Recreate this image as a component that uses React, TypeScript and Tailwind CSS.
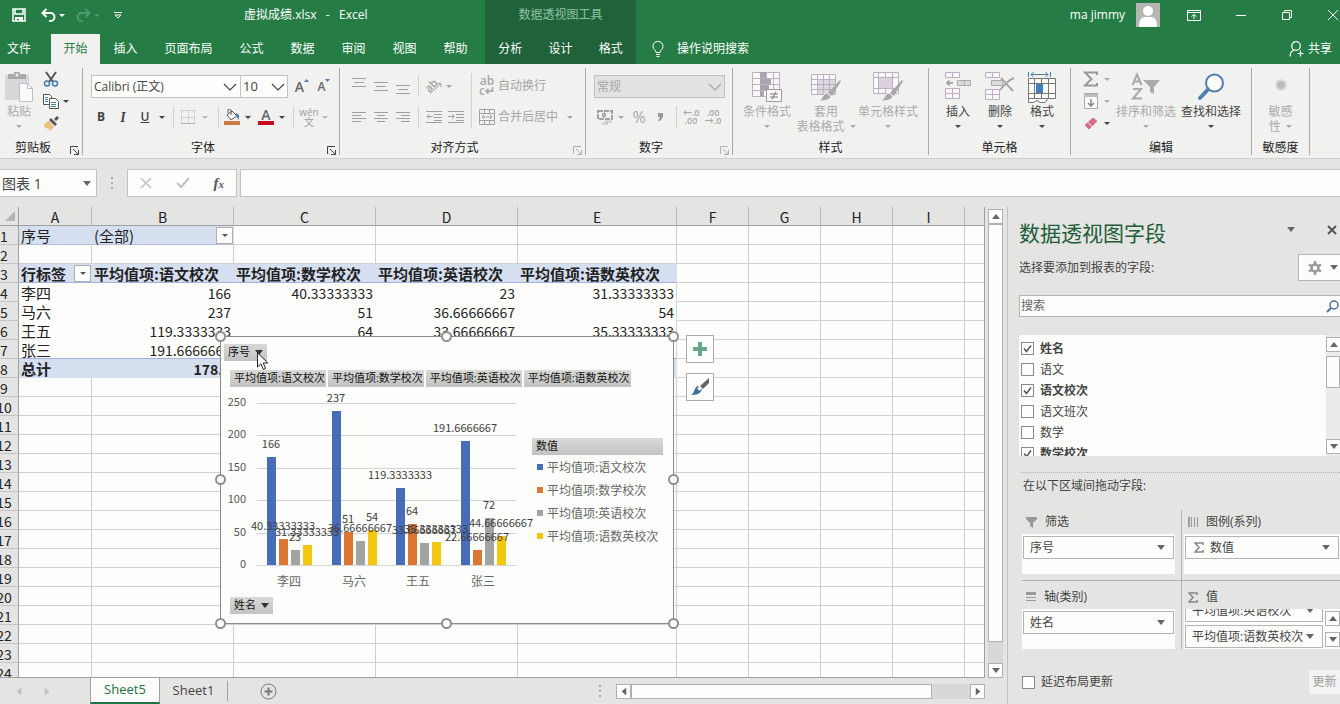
import { FunctionComponent, ReactNode } from "react";

interface IconProps {
  className?: string;
}

const Caret: FunctionComponent<IconProps> = ({ className = "" }) => (
  <svg viewBox="0 0 6 3" className={`h-[3px] w-[6px] shrink-0 fill-current ${className}`}>
    <path d="M0 0h6L3 3z" />
  </svg>
);

const Triangle: FunctionComponent<IconProps> = ({ className = "fill-[#666]" }) => (
  <svg viewBox="0 0 8 5" className={`h-[5px] w-2 shrink-0 ${className}`}>
    <path d="M0 0h8L4 5z" />
  </svg>
);

const Chevron: FunctionComponent<IconProps> = ({ className = "" }) => (
  <svg
    viewBox="0 0 14 8"
    className={`pointer-events-none absolute h-2 w-[14px] fill-none stroke-current ${className}`}
  >
    <path d="M1 1l6 6 6-6" strokeWidth="1.2" />
  </svg>
);

/* ---------- Ribbon building blocks ---------- */

interface GroupProps {
  label: string;
  className: string;
  launcher?: "on" | "off";
  children: ReactNode;
}

const Group: FunctionComponent<GroupProps> = ({ label, className, launcher, children }) => (
  <section
    aria-label={label}
    className={`flex h-[87px] shrink-0 flex-col border-r border-[#aaa] ${className}`}
  >
    <div className="flex h-[72px]">{children}</div>
    <div className="flex h-[15px] items-center leading-[15px] text-[#222]">
      <span className="flex-1 text-center">{label}</span>
      {launcher && (
        <button
          aria-label={`${label}设置`}
          className={`flex h-[15px] w-4 items-end justify-center ${
            launcher === "on" ? "text-[#444]" : "text-[#b0b0b0]"
          }`}
        >
          <svg viewBox="0 0 9 9" className="size-[9px] fill-none stroke-current">
            <path d="M.5 8V.5H8M3 3l5 5M8.500 4v4.500H4" />
          </svg>
        </button>
      )}
    </div>
  </section>
);

interface ToolProps {
  label: string;
  className: string;
  children: ReactNode;
}

const Tool: FunctionComponent<ToolProps> = ({ label, className, children }) => (
  <button
    aria-label={label}
    className={`flex h-[22px] shrink-0 items-center justify-center ${className}`}
  >
    {children}
  </button>
);

interface BigToolProps {
  className: string;
  icon: ReactNode;
  children: ReactNode;
}

const BigTool: FunctionComponent<BigToolProps> = ({ className, icon, children }) => (
  <button
    className={`flex shrink-0 flex-col items-center pt-1 leading-[15px] whitespace-nowrap ${className}`}
  >
    <span className="mb-[2px] flex h-[30px] items-center">{icon}</span>
    {children}
  </button>
);

const CaretLine = () => (
  <span className="flex h-[15px] items-center">
    <Caret />
  </span>
);

const Divider: FunctionComponent<IconProps> = ({ className = "mx-[5px] h-[22px]" }) => (
  <span className={`w-px shrink-0 bg-[#d0d0d0] ${className}`} />
);

const Lines = ({ d }: { d: string }) => (
  <svg viewBox="0 0 16 16" className="size-4 fill-none stroke-[#a0a0a0]">
    <path d={d} />
  </svg>
);

/* ---------- Header ---------- */

const TABS = ["插入", "页面布局", "公式", "数据", "审阅", "视图", "帮助"];

const Header = () => (
  <header className="flex h-16 overflow-hidden bg-[#257d45] text-white">
    <div className="flex w-[485px] shrink-0 flex-col justify-between">
      <div className="flex h-[30px] items-center">
        <button aria-label="保存" className="ml-3">
          <svg viewBox="0 0 14 14" className="size-[14px] fill-none stroke-white" strokeWidth="1.5">
            <path d="M1 1h12v12H1zM3 1v5h8V1" />
            <path d="M3 9h8v4H7v-2H5v2H3z" className="fill-white stroke-none" />
          </svg>
        </button>
        <button aria-label="撤消" className="ml-[15px]">
          <svg viewBox="0 0 15 14" className="h-[14px] w-[15px] fill-none stroke-white" strokeWidth="2">
            <path d="M5.500 1L1.500 5l4 4M2 5h7.500a4 4 0 010 8H8" />
          </svg>
        </button>
        <Caret className="ml-[3px]" />
        <button aria-label="恢复" className="ml-[11px]">
          <svg viewBox="0 0 15 14" className="h-[14px] w-[15px] fill-none stroke-[#4f9a6a]" strokeWidth="2">
            <path d="M9.500 1l4 4-4 4M13 5H5.500a4 4 0 000 8H7" />
          </svg>
        </button>
        <Caret className="ml-[3px] text-[#4f9a6a]" />
        <button aria-label="自定义快速访问工具栏" className="ml-[14px]">
          <svg viewBox="0 0 8 7" className="h-[7px] w-2 fill-none stroke-white">
            <path d="M0 .5h8M1 3l3 3 3-3z" />
          </svg>
        </button>
        <h1 className="ml-[122px] whitespace-pre">虚拟成绩.xlsx   -   Excel</h1>
      </div>
      <nav className="flex h-[30px] items-center">
        <button className="w-[51px] pl-[7px] text-left">文件</button>
        <button className="h-full w-[49px] bg-[#f1f1ef] text-[#257d45]">开始</button>
        {TABS.map((tab) => (
          <button key={tab} className={tab.length > 2 ? "w-[75px]" : "w-[51px]"}>
            {tab}
          </button>
        ))}
      </nav>
    </div>

    <div className="flex w-[151px] shrink-0 flex-col justify-between bg-[#206239]">
      <p className="flex h-[30px] items-center justify-center text-[#8fc4a2]">数据透视图工具</p>
      <nav className="grid h-[30px] grid-cols-3 items-center">
        <button>分析</button>
        <button>设计</button>
        <button>格式</button>
      </nav>
    </div>

    <div className="flex flex-1 flex-col justify-between">
      <div className="flex h-[30px] items-center justify-end">
        <span>ma jimmy</span>
        <svg viewBox="0 0 24 24" className="ml-[11px] size-6 bg-[#b5b5b3] fill-white">
          <circle cx="12" cy="8" r="5" />
          <path d="M3 24c0-7 2-10 6-10h6c4 0 6 3 6 10z" />
        </svg>
        <button aria-label="功能区显示选项" className="ml-[27px]">
          <svg viewBox="0 0 14 11" className="h-[11px] w-[14px] fill-none stroke-white">
            <path d="M.5.5h13v10H.5zM.5 2.500h13M7 9V4.500M4.500 6.500L7 4.500l2.500 2" />
          </svg>
        </button>
        <button aria-label="最小化" className="ml-[35px]">
          <svg viewBox="0 0 10 10" className="size-[10px] stroke-white">
            <path d="M0 5.500h10" />
          </svg>
        </button>
        <button aria-label="还原" className="ml-[36px]">
          <svg viewBox="0 0 10 10" className="size-[10px] fill-none stroke-white">
            <path d="M.5 2.500h7v7h-7zM2.500 2.500v-2h7v7h-2" />
          </svg>
        </button>
        <button aria-label="关闭" className="mr-[2px] ml-[36px]">
          <svg viewBox="0 0 10 10" className="size-[10px] stroke-white">
            <path d="M0 0l10 10M10 0L0 10" />
          </svg>
        </button>
      </div>
      <div className="flex h-[30px] items-center pr-2 pl-4">
        <svg viewBox="0 0 12 16" className="h-4 w-3 fill-none stroke-white">
          <path d="M4 11.500c0-2.500-3-3-3-6.200a5 5 0 0110 0c0 3.200-3 3.700-3 6.200zM4 13.500h4M4.500 15.500h3" />
        </svg>
        <button className="ml-[13px]">操作说明搜索</button>
        <button className="ml-auto flex items-center gap-1">
          <svg viewBox="0 0 15 16" className="h-4 w-[15px] fill-none stroke-white" strokeWidth="1.2">
            <circle cx="7" cy="5" r="4.300" />
            <path d="M1 15.500c0-4 1.500-5.500 4-6.500M11.500 9.500v6M8.500 12.500h6" />
          </svg>
          共享
        </button>
      </div>
    </div>
  </header>
);

/* ---------- Ribbon ---------- */

const StyleBrush = () => (
  <>
    <path d="M29 8l1 1-9 15-4-3z" className="fill-[#a8a8a8] stroke-none" />
    <path d="M16 21l4 3c-1 4-6 5-12 5 4-2 3-7 8-8z" className="fill-[#a8a8a8] stroke-[#f1f1ef]" />
  </>
);

const Ribbon = () => (
  <div className="flex h-[95px] overflow-hidden border-b border-[#d0d0ce] bg-[#f1f1ef] pt-1 text-[#444]">
    <Group label="剪贴板" launcher="on" className="w-[83px]">
      <BigTool
        className="ml-[3px] w-8 text-[#ababab]"
        icon={
          <svg viewBox="0 0 28 30" className="h-[30px] w-7">
            <path d="M0 3h24v25H0z" fill="#d8d6da" />
            <path d="M3 2h6a3 3 0 016 0h6v5H3z" fill="#a9a9ad" />
            <circle cx="12" cy="3" r="1.500" fill="#f1f1ef" />
            <path d="M14.500 11.500h8l5 5v13h-13z" fill="#fbf9fc" stroke="#c0bec4" />
            <path d="M22.500 11.500v5h5" fill="none" stroke="#c0bec4" />
          </svg>
        }
      >
        粘贴
        <CaretLine />
      </BigTool>
      <div className="ml-1 flex w-9 flex-col">
        <Tool label="剪切" className="w-6">
          <svg viewBox="0 0 16 16" className="size-4 fill-none" strokeWidth="1.500">
            <path d="M3 1l7 10M13 1L6 11" stroke="#555" strokeWidth="2" />
            <circle cx="4" cy="12.500" r="2.500" stroke="#4a7eac" />
            <circle cx="12" cy="12.500" r="2.500" stroke="#4a7eac" />
          </svg>
        </Tool>
        <div className="flex items-center">
          <Tool label="复制" className="w-6">
            <svg viewBox="0 0 16 15" className="h-[15px] w-4 fill-[#fdfdfb] stroke-[#555]">
              <path d="M.5.5h6l2 2v8h-8z" />
              <path d="M6.500 4.500h6l3 3v7h-9z" />
              <path d="M2 3.500h3M2 5.500h3M2 7.500h3M8 8.500h5M8 10.500h5M8 12.500h5" stroke="#4a7eac" />
            </svg>
          </Tool>
          <Caret />
        </div>
        <Tool label="格式刷" className="w-6">
          <svg viewBox="0 0 16 15" className="h-[15px] w-4">
            <path d="M1 8l5-3 5 6-4 4-2-3-1 1-1-2-1 1z" fill="#eac17c" />
            <path d="M6 4l2-2 6 6-2 2zM11 3l3-3 2 2-3 3z" fill="#555" />
          </svg>
        </Tool>
      </div>
    </Group>

    <Group label="字体" launcher="on" className="w-[257px]">
      <div className="flex flex-col gap-2 pt-[7px]">
        <div className="flex h-[23px] items-center pl-2">
          <div className="relative flex items-center">
            <select
              aria-label="字体名称"
              className="h-[23px] w-[150px] appearance-none border border-[#c3c3c3] bg-[#fdfdfb] pl-[2px] text-[12px] leading-[21px]"
            >
              <option>Calibri (正文)</option>
            </select>
            <Chevron className="right-1" />
          </div>
          <div className="relative -ml-px flex items-center">
            <select
              aria-label="字号"
              className="h-[23px] w-[48px] appearance-none border border-[#c3c3c3] bg-[#fdfdfb] pl-[2px] text-[13px] leading-[21px]"
            >
              <option>10</option>
            </select>
            <Chevron className="right-[3px]" />
          </div>
          <Tool label="增大字号" className="ml-[3px] w-[22px] text-[14px] font-semibold text-[#666]">
            A
            <svg viewBox="0 0 5 3" className="mb-3 h-[3px] w-[5px] fill-[#4a7eac]">
              <path d="M0 3h5L2.500 0z" />
            </svg>
          </Tool>
          <Tool label="减小字号" className="w-[22px] text-[12px] font-semibold text-[#666]">
            A
            <svg viewBox="0 0 5 3" className="mb-3 h-[3px] w-[5px] fill-[#4a7eac]">
              <path d="M0 0h5L2.500 3z" />
            </svg>
          </Tool>
        </div>
        <div className="flex items-center pl-[7px]">
          <Tool label="加粗" className="w-[22px] font-bold">
            B
          </Tool>
          <Tool label="倾斜" className="w-[22px] font-['Liberation_Serif',serif] text-[14px] font-bold italic">
            I
          </Tool>
          <Tool label="下划线" className="w-[22px] font-semibold underline">
            U
          </Tool>
          <Tool label="下划线选项" className="w-3">
            <Caret />
          </Tool>
          <Divider />
          <Tool label="边框" className="w-[18px]">
            <svg viewBox="0 0 14 14" className="size-[14px] fill-none stroke-[#b8b0bc]" strokeDasharray="1 1">
              <path d="M.5.5h13M.5 7.500h13M.5.5v13M7.500.5v13M13.500.5v13" />
              <path d="M0 13.500h14" strokeDasharray="none" />
            </svg>
          </Tool>
          <Tool label="边框选项" className="w-4 text-[#bbb]">
            <Caret />
          </Tool>
          <Divider />
          <Tool label="填充颜色" className="w-4">
            <svg viewBox="0 0 16 16" className="size-4">
              <path d="M3 6l5-4 5 5-6 4z" fill="#fdfdfb" stroke="#555" />
              <path d="M7 6V1.500a1.500 1.500 0 00-3 0V4" fill="none" stroke="#555" />
              <path d="M12 4c3 1 4 3 2.500 7-.8-1-1-3-2.500-4z" fill="#4a7eac" />
              <path d="M0 12h16v4H0z" fill="#cc7a45" />
            </svg>
          </Tool>
          <Tool label="填充颜色选项" className="w-4">
            <Caret />
          </Tool>
          <Tool label="字体颜色" className="w-5">
            <span className="flex w-4 flex-col items-center text-[14px] leading-[12px] font-semibold text-[#666]">
              A
              <span className="h-1 w-full bg-[#c30d1e]" />
            </span>
          </Tool>
          <Tool label="字体颜色选项" className="w-3">
            <Caret />
          </Tool>
          <Divider />
          <Tool label="拼音" className="w-5 flex-col text-[10px] leading-[10px] text-[#a0a0a0]">
            <span>wén</span>
            <span>文</span>
          </Tool>
          <Tool label="拼音选项" className="w-3 text-[#bbb]">
            <Caret />
          </Tool>
        </div>
      </div>
    </Group>

    <Group label="对齐方式" launcher="off" className="w-[246px] text-[#a6a6a6]">
      <div className="flex flex-col gap-[9px] pt-[7px] pl-2">
        <div className="flex items-center">
          <Tool label="顶端对齐" className="w-[22px]">
            <Lines d="M1 0.500h14M3 4.500h10M1 8.500h14" />
          </Tool>
          <Tool label="垂直居中" className="w-[22px]">
            <Lines d="M1 4.500h14M3 8.500h10M1 12.500h14" />
          </Tool>
          <Tool label="底端对齐" className="w-[22px]">
            <Lines d="M1 7.500h14M3 11.500h10M1 15.500h14" />
          </Tool>
          <Divider className="mx-1 h-[22px]" />
          <Tool label="方向" className="w-[22px]">
            <svg viewBox="0 0 16 16" className="size-4 overflow-visible">
              <text x="-1" y="11" transform="rotate(-45 6 8)" className="fill-[#a0a0a0] text-[11px] font-semibold">
                ab
              </text>
              <path d="M4 15.500L15 5.500M11.500 5.500H15V9" fill="none" stroke="#a0a0a0" />
            </svg>
          </Tool>
          <Tool label="方向选项" className="w-2">
            <Caret />
          </Tool>
        </div>
        <div className="flex items-center">
          <Tool label="左对齐" className="w-[22px]">
            <Lines d="M1 3.500h14M1 6.500h9M1 9.500h14M1 12.500h9" />
          </Tool>
          <Tool label="居中" className="w-[22px]">
            <Lines d="M1 3.500h14M4 6.500h8M1 9.500h14M4 12.500h8" />
          </Tool>
          <Tool label="右对齐" className="w-[22px]">
            <Lines d="M1 3.500h14M6 6.500h9M1 9.500h14M6 12.500h9" />
          </Tool>
          <Divider className="mx-1 h-[22px]" />
          <Tool label="减少缩进量" className="w-[22px]">
            <Lines d="M0 2.500h16M8 5.500h8M8 8.500h8M8 11.500h8M0 13.500h16M1 7.500h6M3.500 5L1 7.500 3.500 10" />
          </Tool>
          <Tool label="增加缩进量" className="w-[22px]">
            <Lines d="M0 2.500h16M8 5.500h8M8 8.500h8M8 11.500h8M0 13.500h16M0 7.500h6M4 5l2.500 2.500L4 10" />
          </Tool>
        </div>
      </div>
      <Divider className="mt-[5px] mr-[7px] ml-1 h-[55px]" />
      <div className="flex flex-col gap-[9px] pt-[7px]">
        <button className="flex h-[22px] items-center gap-[3px]">
          <span className="flex w-4 flex-col items-center text-[12px] leading-[10px] font-semibold">
            <span>ab</span>
            <span>c↵</span>
          </span>
          自动换行
        </button>
        <button className="flex h-[22px] items-center gap-[3px]">
          <svg viewBox="0 0 16 16" className="size-4 fill-none stroke-[#a0a0a0]">
            <path d="M.5.5h15v15H.5zM.5 4.500h15M.5 11.500h15M5.500.5v4M10.500.5v4M5.500 11.500v4M10.500 11.500v4M3 8h10M5 6L3 8l2 2M11 6l2 2-2 2" />
          </svg>
          合并后居中
          <Caret className="ml-[6px]" />
        </button>
      </div>
    </Group>

    <Group label="数字" launcher="off" className="w-[147px] text-[#a6a6a6]">
      <div className="flex flex-col gap-2 pt-[7px] pl-2">
        <div className="relative flex items-center">
          <select
            aria-label="数字格式"
            className="h-[23px] w-[131px] appearance-none border border-[#c0c0c0] bg-[#e2e2e0] pl-[2px] leading-[21px]"
          >
            <option>常规</option>
          </select>
          <Chevron className="right-[3px]" />
        </div>
        <div className="flex items-center">
          <Tool label="会计数字格式" className="w-[22px]">
            <svg viewBox="0 0 16 15" className="h-[15px] w-4 fill-none stroke-[#a0a0a0]">
              <path d="M1 1h14v8H1z" strokeWidth="2" strokeDasharray="5 1" />
              <path d="M8 3c-3 0-3 4 0 4M8 3v4" strokeWidth="1.500" />
              <path d="M8 11.500h7M5 13.500h6" stroke="#c8c8c8" strokeWidth="2" />
            </svg>
          </Tool>
          <Tool label="会计数字格式选项" className="w-[10px]">
            <Caret />
          </Tool>
          <Tool label="百分比样式" className="w-[26px] text-[16px]">
            %
          </Tool>
          <Tool label="千位分隔样式" className="w-4">
            <svg viewBox="0 0 5 8" className="h-2 w-[5px] fill-[#999]">
              <path d="M0 0h5v4L2 8H0l2-4H0z" />
            </svg>
          </Tool>
          <Divider className="mr-[3px] ml-2 h-[22px]" />
          <Tool label="增加小数位数" className="w-[22px] flex-col text-[9px] leading-[8px] font-semibold">
            <span>←.0</span>
            <span>.00</span>
          </Tool>
          <Tool label="减少小数位数" className="w-[22px] flex-col text-[9px] leading-[8px] font-semibold">
            <span>.00</span>
            <span>→.0</span>
          </Tool>
        </div>
      </div>
    </Group>

    <Group label="样式" className="w-[196px] text-[#ababab]">
      <BigTool
        className="ml-[5px] w-[58px]"
        icon={
          <svg viewBox="0 0 30 30" className="size-[30px] fill-[#fbf7fc] stroke-[#bbb1be]">
            <path d="M.5.5h27v24H.5zM.5 6.500h27M.5 12.500h27M.5 18.500h27M8.500.5v24M14.500.5v24M21.500.5v24" />
            <path d="M8 0h6v6H8zM8 7h11v5H8zM8 13h9v5H8zM8 19h4v5H8z" className="fill-[#a9a3ad] stroke-none" />
            <path d="M14.500 17.500h15v12h-15z" className="stroke-[#999]" />
            <path d="M18 22h8M18 25h8M24 19.500l-4 8" className="stroke-[#777]" />
          </svg>
        }
      >
        条件格式
        <CaretLine />
      </BigTool>
      <BigTool
        className="w-[60px]"
        icon={
          <svg viewBox="0 0 30 30" className="size-[30px] fill-[#fbf7fc] stroke-[#bbb1be]">
            <path d="M.5 2.500h24v20H.5z" />
            <path d="M6 8h18v14H6z" className="fill-[#dcd6de] stroke-none" />
            <path d="M.5 7.500h24M.5 12.500h24M.5 17.500h24M6.500 2.500v20M12.500 2.500v20M18.500 2.500v20" />
            <StyleBrush />
          </svg>
        }
      >
        套用
        <span className="flex items-center gap-[5px]">
          表格格式
          <Caret />
        </span>
      </BigTool>
      <BigTool
        className="w-16"
        icon={
          <svg viewBox="0 0 30 30" className="size-[30px] fill-[#fbf7fc] stroke-[#bbb1be]">
            <path d="M.5.5h25v21H.5zM.5 5.500h25M.5 16.500h25M5.500.5v21M19.500.5v21M12.500.5v21" />
            <path d="M6 6h13v10H6z" className="fill-[#dcd2de] stroke-none" />
            <StyleBrush />
          </svg>
        }
      >
        单元格样式
        <CaretLine />
      </BigTool>
    </Group>

    <Group label="单元格" className="w-[142px]">
      <BigTool
        className="ml-2 w-[42px]"
        icon={
          <svg viewBox="0 0 28 30" className="h-[30px] w-7 fill-[#fbf7fc] stroke-[#bcaec0]">
            <path d="M1.500.5h14v5h-14zM8.500.5v5M1.500 16.500h14v10h-14zM8.500 16.500v10M1.500 21.500h14" />
            <path d="M13.500 8.500h13v5h-13zM20.500 8.500v5" className="fill-[#ddd8df] stroke-[#aaa]" />
            <path d="M3 11h6M5.500 8.500L3 11l2.500 2.500" className="fill-none stroke-[#999]" strokeWidth="1.500" />
          </svg>
        }
      >
        插入
        <CaretLine />
      </BigTool>
      <BigTool
        className="w-[42px]"
        icon={
          <svg viewBox="0 0 30 30" className="size-[30px] fill-[#fbf7fc] stroke-[#bcaec0]">
            <path d="M.5.5h14v5H.5zM7.500.5v5M.5 17.500h14v10H.5zM7.500 17.500v10M.5 22.500h14" />
            <path d="M6.500 8.500h11v5h-11z" className="fill-[#ddd8df] stroke-[#aaa]" />
            <path d="M16 6l12 13M29 6C23 8 19 13 15 18" className="fill-none stroke-[#a8a8a8]" strokeWidth="2" />
          </svg>
        }
      >
        删除
        <CaretLine />
      </BigTool>
      <BigTool
        className="w-[42px]"
        icon={
          <svg viewBox="0 0 28 32" className="h-8 w-7 fill-[#fdfdfb] stroke-[#777]">
            <path d="M.5 7.500h27v20H20l-3 4h-5l-3-2-4 2H.5zM.5 12.500h27M.5 22.500h27M6.500 7.500v20M20.500 7.500v20M13.500 7.500v5M13.500 22.500v5M.5 27.500H20" />
            <path d="M8 13h7v9H8z" className="fill-[#3f7fbd] stroke-none" />
            <path d="M.5 1v5M22.500 1v5M3 3.500h17M5.500 1L3 3.500 5.500 6M17.500 1L20 3.500 17.500 6" className="fill-none stroke-[#4a7eac]" />
          </svg>
        }
      >
        格式
        <CaretLine />
      </BigTool>
    </Group>

    <Group label="编辑" className="w-[181px]">
      <div className="ml-[11px] flex w-[31px] flex-col">
        <Tool label="自动求和" className="w-7 gap-[5px] text-[#aaa]">
          <svg viewBox="0 0 16 16" className="size-4 fill-none stroke-[#999]" strokeWidth="2">
            <path d="M14 4V1.500H2L8.500 8 2 14.500h12V12" />
          </svg>
          <Caret />
        </Tool>
        <Tool label="填充" className="w-7 gap-[5px] text-[#aaa]">
          <svg viewBox="0 0 16 16" className="size-4 fill-[#fbf9fc] stroke-[#aaa]">
            <path d="M1.500.5h13v15h-13z" />
            <path d="M1 1h14v3H1z" className="fill-[#bbb] stroke-none" />
            <path d="M8 6v7M5 10l3 3 3-3" className="fill-none stroke-[#888]" strokeWidth="1.500" />
          </svg>
          <Caret />
        </Tool>
        <Tool label="清除" className="w-7 gap-[5px]">
          <svg viewBox="0 0 16 16" className="size-4 stroke-[#f1f1ef]">
            <path d="M1 10l9-8 5 4-9 9z" fill="#d86c8a" />
            <path d="M4.500 7l5 5" />
          </svg>
          <Caret />
        </Tool>
      </div>
      <BigTool
        className="w-[66px] text-[#ababab]"
        icon={
          <svg viewBox="0 0 30 30" className="size-[30px] fill-none stroke-[#aaa]" strokeWidth="2">
            <path d="M1.500 13L6 2.500 10.500 13M3 9.500h6M2 17h8L2 26.500h9" />
            <path d="M12 8h17l-6 7v7l-4-2v-5z" className="fill-[#aaa] stroke-none" />
          </svg>
        }
      >
        排序和筛选
        <CaretLine />
      </BigTool>
      <BigTool
        className="w-16"
        icon={
          <svg viewBox="0 0 28 28" className="size-7 stroke-[#4f7fae]">
            <path d="M11 16.500L3 25" strokeWidth="4" strokeLinecap="round" />
            <circle cx="17.500" cy="10" r="8.500" className="fill-[#fdfdfb]" strokeWidth="2" />
          </svg>
        }
      >
        查找和选择
        <CaretLine />
      </BigTool>
    </Group>

    <Group label="敏感度" className="w-[58px] text-[#ababab]">
      <BigTool
        className="w-full"
        icon={
          <svg viewBox="0 0 12 12" className="mb-1 size-3">
            <circle cx="6" cy="6" r="6" fill="#dcdcdc" />
            <circle cx="6" cy="6" r="4" fill="#bcbcbc" />
          </svg>
        }
      >
        敏感
        <span className="flex items-center gap-[5px]">
          性
          <Caret />
        </span>
      </BigTool>
    </Group>
  </div>
);

const FormulaBar = () => (
  <div className="flex h-12 items-start bg-[#e4e4e2] pt-[10px]">
    <div className="flex h-7 w-[97px] items-center border border-l-0 border-[#c3c3c3] bg-[#fdfdfb] pr-[5px]">
      <input
        aria-label="名称框"
        defaultValue="图表 1"
        className="w-full min-w-0 bg-transparent pl-[2px] text-[14px] text-[#444] outline-none"
      />
      <Triangle />
    </div>
    <span className="flex h-7 w-[30px] flex-col items-center justify-center gap-[3px]">
      <i className="size-[2px] bg-[#aaa]" />
      <i className="size-[2px] bg-[#aaa]" />
      <i className="size-[2px] bg-[#aaa]" />
    </span>
    <div className="mr-[3px] flex h-7 w-[110px] items-center justify-around border border-[#c3c3c3] bg-[#fdfdfb]">
      <button aria-label="取消">
        <svg viewBox="0 0 12 12" className="size-3 stroke-[#c0c0c0]" strokeWidth="1.500">
          <path d="M1 1l10 10M11 1L1 11" />
        </svg>
      </button>
      <button aria-label="输入">
        <svg viewBox="0 0 14 12" className="h-3 w-[14px] fill-none stroke-[#c0c0c0]" strokeWidth="2">
          <path d="M1 6l4 4 8-9" />
        </svg>
      </button>
      <button aria-label="插入函数" className="font-['Liberation_Serif',serif] text-[15px] font-bold text-[#555] italic">
        f<span className="text-[11px]">x</span>
      </button>
    </div>
    <input aria-label="编辑栏" className="h-7 min-w-0 flex-1 border border-r-0 border-[#c3c3c3] bg-[#fdfdfb] px-2" />
  </div>
);

/* ---------- Sheet ---------- */

const COLUMNS = ["A", "B", "C", "D", "E", "F", "G", "H", "I", ""];
const ROW_COUNT = 24;

const CELLS: Record<number, string[]> = {
  1: ["序号", "(全部)"],
  3: ["行标签", "平均值项:语文校次", "平均值项:数学校次", "平均值项:英语校次", "平均值项:语数英校次"],
  4: ["李四", "166", "40.33333333", "23", "31.33333333"],
  5: ["马六", "237", "51", "36.66666667", "54"],
  6: ["王五", "119.3333333", "64", "33.66666667", "35.33333333"],
  7: ["张三", "191.6666667", "22.66666667", "72", "44.66666667"],
  8: ["总计", "178.5", "44.5", "41.33333333", "41.33333333"],
};

const cellClass = (row: number, col: number) => {
  const inPivot = col < 5 && row >= 3 && row <= 8;
  if ((row === 1 && col < 2) || (inPivot && (row === 3 || row === 8))) {
    const line =
      row === 8 ? "border-b-[#d6dff0]" : row === 3 ? "border-b-[#9fb3dc]" : "border-b-[#b5bfd8]";
    return `border-r bg-[#d6dff0] border-r-[#d6dff0] ${line}`;
  }
  if (inPivot) {
    const bottom = row === 7 ? "border-b-[#9fb3dc]" : "border-b-transparent";
    return `border-r ${bottom} ${col === 4 ? "border-r-[#d3d3d1]" : "border-r-transparent"}`;
  }
  return col === COLUMNS.length - 1 ? "border-[#d0d0ce]" : "border-r border-[#d0d0ce]";
};

const FilterButton = ({ label }: { label: string }) => (
  <button
    aria-label={label}
    className="flex size-[17px] shrink-0 items-center justify-center border border-[#b0b0b0] bg-[#fdfdfb] text-[#555]"
  >
    <Caret />
  </button>
);

const Cell = ({ row, col }: { row: number; col: number }) => {
  const value = CELLS[row]?.[col] ?? "";
  const numeric = row > 3 && col > 0;
  const bold = row === 3 || row === 8 ? "font-bold" : "";
  return (
    <td className={`border-b p-0 ${cellClass(row, col)}`}>
      <div
        className={`flex h-[18px] items-center justify-between pl-[2px] leading-[18px] whitespace-nowrap ${
          numeric ? "pr-[2px] text-[14px]" : "text-[15px]"
        } ${bold}`}
      >
        <span className={numeric ? "ml-auto pt-[2px]" : "pt-[2px]"}>{value}</span>
        {row === 1 && col === 1 && <FilterButton label="筛选 序号" />}
        {row === 3 && col === 0 && <FilterButton label="筛选 行标签" />}
      </div>
    </td>
  );
};

const Grid = () => (
  <table className="w-full table-fixed border-separate border-spacing-0 font-['Noto_Sans_CJK_SC',sans-serif] text-[#222]">
    <colgroup>
      <col className="w-[19px]" />
      <col className="w-[73px]" />
      <col className="w-[142px]" />
      <col className="w-[142px]" />
      <col className="w-[142px]" />
      <col className="w-[159px]" />
      <col className="w-[72px]" />
      <col className="w-[72px]" />
      <col className="w-[72px]" />
      <col className="w-[72px]" />
      <col />
    </colgroup>
    <thead>
      <tr className="h-[19px] bg-[#e4e4e2]">
        <th className="border-r border-b border-[#a0a0a0] p-0">
          <svg viewBox="0 0 10 10" className="ml-[5px] size-[10px] fill-[#b5b5b3]">
            <path d="M10 0v10H0z" />
          </svg>
        </th>
        {COLUMNS.map((name, i) => (
          <th
            key={i}
            className={`border-b border-r-[#b8b8b6] border-b-[#a0a0a0] p-0 text-[14px] font-normal ${
              name ? "border-r" : ""
            }`}
          >
            <div className="h-[18px] pt-[2px] leading-[16px]">{name}</div>
          </th>
        ))}
      </tr>
    </thead>
    <tbody>
      {Array.from({ length: ROW_COUNT }, (_, i) => i + 1).map((row) => (
        <tr key={row} className="h-[19px]">
          <th className="border-r border-b border-r-[#a0a0a0] border-b-[#c4c4c2] bg-[#e4e4e2] p-0 text-[14px] font-normal">
            <span className="flex h-[18px] w-2 justify-center pt-[2px] leading-[16px]">{row}</span>
          </th>
          {COLUMNS.map((_, col) => (
            <Cell key={col} row={row} col={col} />
          ))}
        </tr>
      ))}
    </tbody>
  </table>
);

/* ---------- Pivot chart ---------- */

const SERIES = [
  { name: "平均值项:语文校次", fill: "fill-[#486db8]", bg: "bg-[#486db8]" },
  { name: "平均值项:数学校次", fill: "fill-[#dc7633]", bg: "bg-[#dc7633]" },
  { name: "平均值项:英语校次", fill: "fill-[#a3a3a1]", bg: "bg-[#a3a3a1]" },
  { name: "平均值项:语数英校次", fill: "fill-[#f2c80f]", bg: "bg-[#f2c80f]" },
];
const AXIS = [0, 50, 100, 150, 200, 250];
const CATEGORIES = [4, 5, 6, 7];

const yOf = (value: number) => Math.round(178 - value * 0.648);

const Plot = () => (
  <svg
    viewBox="0 0 311 204"
    className="h-[204px] w-[311px] shrink-0 overflow-visible font-['Noto_Sans_CJK_SC',sans-serif] text-[11px]"
  >
    {AXIS.map((tick) => (
      <g key={tick}>
        <path d={`M36 ${yOf(tick) + 0.5}H295`} className="stroke-[#d4d4d2]" />
        <text x="25" y={yOf(tick) + 3} textAnchor="end" className="fill-[#555]">
          {tick}
        </text>
      </g>
    ))}
    {CATEGORIES.map((row, c) => {
      const left = Math.round(46 + c * 64.7);
      return (
        <g key={row}>
          {SERIES.map((series, s) => {
            const top = yOf(Number(CELLS[row][s + 1]));
            return (
              <rect
                key={series.name}
                x={left + s * 12}
                y={top}
                width="9"
                height={178 - top}
                className={series.fill}
              />
            );
          })}
          <text x={left + 22} y="199" textAnchor="middle" className="fill-[#666] text-[12px]">
            {CELLS[row][0]}
          </text>
        </g>
      );
    })}
    {CATEGORIES.map((row, c) =>
      SERIES.map((series, s) => (
        <text
          key={`${row}-${series.name}`}
          x={Math.round(46 + c * 64.7) + s * 12 + 4}
          y={yOf(Number(CELLS[row][s + 1])) - 9}
          textAnchor="middle"
          className="fill-[#404040]"
        >
          {CELLS[row][s + 1]}
        </text>
      )),
    )}
  </svg>
);

const FIELD_BUTTON =
  "flex h-[17px] items-center bg-linear-to-b from-[#d9d9d7] to-[#c2c2c0] pl-1 text-[11px] whitespace-nowrap text-[#111]";

const HANDLES = [
  "-left-[6px] -top-[6px]",
  "left-1/2 -ml-[6px] -top-[6px]",
  "-right-[6px] -top-[6px]",
  "-left-[6px] top-1/2 -mt-[6px]",
  "-right-[6px] top-1/2 -mt-[6px]",
  "-left-[6px] -bottom-[6px]",
  "left-1/2 -ml-[6px] -bottom-[6px]",
  "-right-[6px] -bottom-[6px]",
];

const PivotChart = () => (
  <div className="absolute top-[129px] left-[220px] h-[288px] w-[454px] border border-[#8a8a8a] bg-[#fdfdfb]">
    <div className="flex h-full flex-col items-start overflow-hidden">
      <button className={`${FIELD_BUTTON} mt-[7px] ml-[3px] w-[43px] justify-between pr-1`}>
        序号
        <Triangle className="fill-[#333]" />
      </button>
      <div className="mt-[9px] ml-[9px] flex gap-[2px]">
        {SERIES.map(({ name }) => (
          <button key={name} className={`${FIELD_BUTTON} pr-px`}>
            {name}
          </button>
        ))}
      </div>
      <div className="flex w-full">
        <Plot />
        <div className="flex w-[131px] flex-col pt-[51px]">
          <button className={FIELD_BUTTON}>数值</button>
          <ul className="flex flex-col text-[12px] text-[#666]">
            {SERIES.map(({ name, bg }) => (
              <li
                key={name}
                className="flex h-[23px] items-center gap-1 pl-[5px] font-['Noto_Sans_CJK_SC',sans-serif] whitespace-nowrap"
              >
                <i className={`size-[6px] ${bg}`} />
                {name}
              </li>
            ))}
          </ul>
        </div>
      </div>
      <button className={`${FIELD_BUTTON} mt-[6px] ml-[9px] w-[43px] justify-between pr-1`}>
        姓名
        <Triangle className="fill-[#333]" />
      </button>
    </div>
    {HANDLES.map((place) => (
      <span key={place} className={`absolute size-[11px] rounded-full border-2 border-[#8f8f8f] bg-[#fdfdfb] ${place}`} />
    ))}
    <svg viewBox="0 0 12 19" className="absolute top-[15px] left-9 h-[19px] w-3 fill-white stroke-[#222]">
      <path d="M.5.8v14.200l3.400-3.200 2.400 5.700 2.300-1-2.400-5.500h4.600z" />
    </svg>
    <div className="absolute -top-[2px] -right-[41px] flex flex-col gap-[10px]">
      <button aria-label="图表元素" className="flex size-7 items-center justify-center border border-[#ababab] bg-[#fdfdfb]">
        <svg viewBox="0 0 14 14" className="size-[14px] fill-[#68a58a]">
          <path d="M5 0h4v5h5v4H9v5H5V9H0V5h5z" />
        </svg>
      </button>
      <button aria-label="图表样式" className="flex size-7 items-center justify-center border border-[#ababab] bg-[#fdfdfb]">
        <svg viewBox="0 0 18 18" className="size-[18px]">
          <path d="M18 0v5l-6 6-3-3z" fill="#666" />
          <path d="M7 8l4 3c-1 5-6 6-11 6 4-2 3-8 7-9z" fill="#3f7196" />
          <circle cx="8.500" cy="10.500" r="2" fill="#e8eff5" />
        </svg>
      </button>
    </div>
  </div>
);

const SCROLL_BUTTON =
  "flex size-[15px] shrink-0 items-center justify-center border border-[#b0b0b0] bg-[#fdfdfb]";

const VerticalScroll: FunctionComponent<IconProps> = ({ className = "" }) => (
  <div className={`flex flex-col bg-[#d8d8d6] ${className}`}>
    <button aria-label="向上滚动" className={SCROLL_BUTTON}>
      <Triangle className="rotate-180 fill-[#666]" />
    </button>
    <div className="flex-1 border border-[#b0b0b0] bg-[#fdfdfb]" />
    <div className="h-[21px]" />
    <button aria-label="向下滚动" className={SCROLL_BUTTON}>
      <Triangle />
    </button>
  </div>
);

const SheetTabs = () => (
  <footer className="flex h-[26px] shrink-0 items-center bg-[#e4e4e2] pr-[22px] text-[13px] text-[#444]">
    <div className="flex w-[90px] gap-5 pl-[15px]">
      <Triangle className="rotate-90 fill-[#c0c0be]" />
      <Triangle className="-rotate-90 fill-[#c0c0be]" />
    </div>
    <button className="h-full w-[70px] border-x border-b-2 border-x-[#a0a0a0] border-b-[#217346] bg-[#fdfdfb] text-[#217346]">
      Sheet5
    </button>
    <button className="h-5 w-[68px] border-r border-[#a0a0a0]">Sheet1</button>
    <button aria-label="新工作表" className="ml-8">
      <svg viewBox="0 0 17 17" className="size-[17px] fill-none stroke-[#777]">
        <circle cx="8.500" cy="8.500" r="7.500" />
        <path d="M8.500 4.500v8M4.500 8.500h8" strokeWidth="2" />
      </svg>
    </button>
    <div className="ml-auto flex w-[386px] items-center">
      <span className="mr-[15px] flex flex-col gap-[3px]">
        <i className="size-[2px] bg-[#aaa]" />
        <i className="size-[2px] bg-[#aaa]" />
        <i className="size-[2px] bg-[#aaa]" />
      </span>
      <button aria-label="向左滚动" className={SCROLL_BUTTON}>
        <Triangle className="rotate-90 fill-[#666]" />
      </button>
      <div className="h-[15px] flex-1 border border-[#b0b0b0] bg-[#fdfdfb]" />
      <div className="h-[15px] w-[38px] bg-[#d8d8d6]" />
      <button aria-label="向右滚动" className={SCROLL_BUTTON}>
        <Triangle className="-rotate-90 fill-[#666]" />
      </button>
    </div>
  </footer>
);

/* ---------- Field pane ---------- */

interface CheckProps {
  label: string;
  checked?: boolean;
}

const CheckField: FunctionComponent<CheckProps> = ({ label, checked = false }) => (
  <label className="flex h-[21px] shrink-0 items-center gap-[6px]">
    <span className="relative flex">
      <input
        type="checkbox"
        defaultChecked={checked}
        className="peer size-[13px] appearance-none border border-[#8a8a8a] bg-[#fdfdfb]"
      />
      <svg
        viewBox="0 0 13 13"
        className="pointer-events-none absolute hidden size-[13px] fill-none stroke-[#555] peer-checked:block"
      >
        <path d="M3 6.500l2.500 3L10 3.500" strokeWidth="1.500" />
      </svg>
    </span>
    <span className={checked ? "font-bold" : ""}>{label}</span>
  </label>
);

const FIELDS = [
  { label: "姓名", checked: true },
  { label: "语文" },
  { label: "语文校次", checked: true },
  { label: "语文班次" },
  { label: "数学" },
  { label: "数学校次", checked: true },
];

const SigmaIcon: FunctionComponent<IconProps> = ({ className = "" }) => (
  <svg viewBox="0 0 10 11" className={`h-[11px] w-[10px] shrink-0 fill-none stroke-[#888] ${className}`}>
    <path d="M9 3V1H1l4 4.500L1 10h8V8" strokeWidth="1.500" />
  </svg>
);

interface AreaProps {
  title: string;
  icon: ReactNode;
  className?: string;
  children: ReactNode;
}

const Area: FunctionComponent<AreaProps> = ({ title, icon, className = "", children }) => (
  <section className={className}>
    <h3 className="flex h-6 items-center gap-2 pl-1">
      {icon}
      {title}
    </h3>
    {children}
  </section>
);

interface PillProps {
  label: string;
  icon?: ReactNode;
}

const Pill: FunctionComponent<PillProps> = ({ label, icon }) => (
  <button className="mx-px flex h-[23px] shrink-0 items-center gap-[3px] border border-[#b4b4b2] pr-2 pl-[6px] whitespace-nowrap">
    {icon}
    {label}
    <Triangle className="ml-auto fill-[#666]" />
  </button>
);

const FieldPane = () => (
  <aside className="flex w-[333px] shrink-0 flex-col overflow-hidden border-l border-[#c0c0be] pl-[11px] text-[#444]">
    <div className="flex h-[47px] items-center pt-[6px]">
      <h2 className="text-[21px] text-[#215c38]">数据透视图字段</h2>
      <button aria-label="任务窗格选项" className="mr-[32px] ml-auto">
        <Triangle className="mb-2 fill-[#666]" />
      </button>
      <button aria-label="关闭窗格" className="mr-[3px] mb-2">
        <svg viewBox="0 0 10 10" className="size-[10px] stroke-[#555]" strokeWidth="2">
          <path d="M1 1l8 8M9 1L1 9" />
        </svg>
      </button>
    </div>
    <div className="flex items-center justify-between">
      <p>选择要添加到报表的字段:</p>
      <button
        aria-label="工具"
        className="flex h-[27px] w-[42px] items-center gap-2 border border-r-0 border-[#b4b4b2] bg-[#fdfdfb] pl-[9px]"
      >
        <svg viewBox="0 0 14 14" className="size-[14px] fill-none stroke-[#999]">
          <circle cx="7" cy="7" r="3.500" strokeWidth="2.500" />
          <path d="M7 0v3M7 11v3M1 3.500l2.500 1.500M10.500 9l2.500 1.500M13 3.500L10.500 5M3.500 9L1 10.500" strokeWidth="2.500" />
        </svg>
        <Triangle />
      </button>
    </div>
    <label className="mt-[14px] flex h-[22px] items-center border border-r-0 border-[#b4b4b2] bg-[#fdfdfb] pr-px">
      <input
        aria-label="搜索"
        placeholder="搜索"
        className="min-w-0 flex-1 bg-transparent pl-px outline-none placeholder:text-[#666]"
      />
      <svg viewBox="0 0 13 13" className="size-[13px] fill-none stroke-[#4f6f9f]" strokeWidth="2">
        <circle cx="8" cy="5" r="4" strokeWidth="1.500" />
        <path d="M5 8l-4 4" />
      </svg>
    </label>
    <div className="mt-[18px] flex h-[121px]">
      <div className="flex flex-1 flex-col overflow-hidden bg-[#fdfdfb] pt-[3px] pl-[2px]">
        {FIELDS.map((field) => (
          <CheckField key={field.label} {...field} />
        ))}
      </div>
      <div className="flex w-[14px] flex-col bg-[#ebebe9] py-[2px]">
        <button aria-label="向上" className={SCROLL_BUTTON}>
          <Triangle className="rotate-180 fill-[#666]" />
        </button>
        <div className="mt-1 h-8 border border-[#b0b0b0] bg-[#fdfdfb]" />
        <button aria-label="向下" className={`${SCROLL_BUTTON} mt-auto`}>
          <Triangle />
        </button>
      </div>
    </div>
    <div className="mt-4 ml-[2px] border-t border-dotted border-[#b4b4b2]" />
    <p className="mt-1 ml-1 leading-[18px]">在以下区域间拖动字段:</p>
    <div className="mt-[15px] ml-[3px] grid grid-cols-[160px_minmax(0,1fr)]">
      <Area
        title="筛选"
        className="border-r border-b border-[#b4b4b2] pr-[6px] pb-[6px]"
        icon={
          <svg viewBox="0 0 11 11" className="size-[11px] fill-[#999]">
            <path d="M0 0h11v2L7 6v5l-3-2V6L0 2z" />
          </svg>
        }
      >
        <div className="flex h-10 flex-col bg-[#fdfdfb] pt-[2px]">
          <Pill label="序号" />
        </div>
      </Area>
      <Area
        title="图例(系列)"
        className="border-b border-[#b4b4b2] pb-[6px] pl-[2px]"
        icon={
          <svg viewBox="0 0 10 10" className="size-[10px] stroke-[#999]">
            <path d="M1 0v10" strokeWidth="2" />
            <path d="M3.500 0v10M6.500 0v10M9.500 0v10" />
          </svg>
        }
      >
        <div className="flex h-10 flex-col bg-[#fdfdfb] pt-[2px]">
          <Pill label="数值" icon={<SigmaIcon className="mr-[3px] ml-[2px]" />} />
        </div>
      </Area>
      <Area
        title="轴(类别)"
        className="border-r border-[#b4b4b2] pt-1 pr-[6px]"
        icon={
          <svg viewBox="0 0 10 10" className="size-[10px] stroke-[#999]">
            <path d="M0 1.500h10" strokeWidth="3" />
            <path d="M0 5.500h10M0 8.500h10" />
          </svg>
        }
      >
        <div className="flex h-10 flex-col bg-[#fdfdfb] pt-[2px]">
          <Pill label="姓名" />
        </div>
      </Area>
      <Area title="值" className="pt-1 pl-[2px]" icon={<SigmaIcon />}>
        <div className="flex h-10 bg-[#fdfdfb]">
          <div className="flex min-w-0 flex-1 flex-col justify-end gap-[3px] overflow-hidden pb-px">
            <Pill label="平均值项:英语校次" />
            <Pill label="平均值项:语数英校次" />
          </div>
          <div className="flex w-4 shrink-0 flex-col justify-between py-[2px] pl-px">
            <button aria-label="上移" className={SCROLL_BUTTON}>
              <Triangle className="rotate-180 fill-[#666]" />
            </button>
            <button aria-label="下移" className={SCROLL_BUTTON}>
              <Triangle />
            </button>
          </div>
        </div>
      </Area>
    </div>
    <div className="mt-[21px] ml-[3px] flex items-center justify-between">
      <CheckField label="延迟布局更新" />
      <button className="h-6 w-[31px] bg-[#f3f3f1] text-[#a0a0a0]">更新</button>
    </div>
  </aside>
);

const App = () => (
  <div className="flex h-screen flex-col overflow-hidden bg-[#e4e4e2] font-['Open_Sans','Noto_Sans_CJK_SC',sans-serif] text-[12px]">
    <Header />
    <Ribbon />
    <FormulaBar />
    <main className="flex min-h-0 flex-1">
      <div className="flex min-w-0 flex-1 flex-col">
        <div className="flex min-h-0 flex-1">
          <div className="relative min-w-0 flex-1 overflow-hidden border-r border-b border-[#a0a0a0] bg-[#fdfdfb]">
            <Grid />
            <PivotChart />
          </div>
          <VerticalScroll className="mt-[2px] mr-[4px] ml-[3px] w-[15px]" />
        </div>
        <SheetTabs />
      </div>
      <FieldPane />
    </main>
  </div>
);

export default App;
